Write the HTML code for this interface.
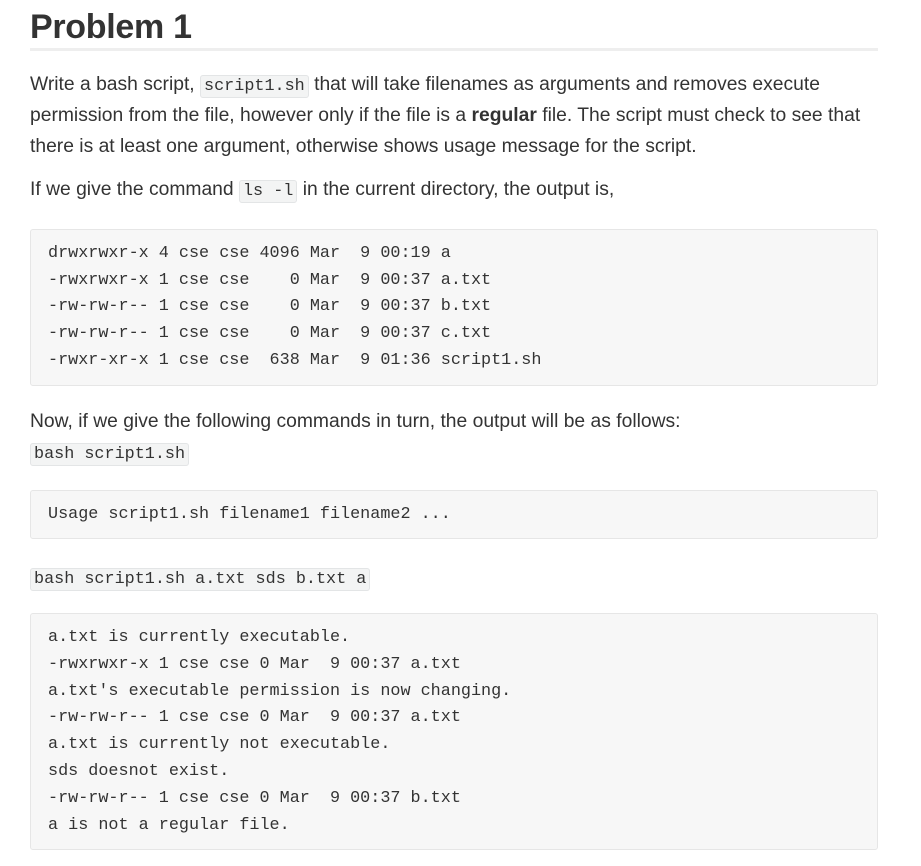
<!DOCTYPE html>
<html><head><style>
body{margin:0;background:#fff;width:921px;height:866px;position:relative;overflow:hidden;font-family:"Liberation Sans",sans-serif;color:#333}
h1{position:absolute;left:30px;top:8px;margin:0;font-size:34px;font-weight:bold;letter-spacing:-0.3px;color:#333}
.hr{position:absolute;left:30px;top:48px;width:848px;height:3px;background:#eee}
.p{position:absolute;left:30px;font-size:19.3px;white-space:nowrap;letter-spacing:0}
code{font-family:"Liberation Mono",monospace;font-size:16.8px;background:#f3f4f4;border:1px solid #e3e5e6;border-radius:3px;padding:1px 3px;color:#333;letter-spacing:0}
.blk{position:absolute;left:30px;width:846px;background:#f7f7f7;border:1px solid #e6e6e6;border-radius:3px}
.m{position:absolute;left:48px;font-family:"Liberation Mono",monospace;font-size:16.8px;white-space:pre;line-height:20px}
</style></head><body>
<h1>Problem 1</h1>
<div class="hr"></div>
<div class="p" style="top:74px">Write a bash script, <code>script1.sh</code> that will take filenames as arguments and removes execute</div>
<div class="p" style="top:105px">permission from the file, however only if the file is a <b>regular</b> file. The script must check to see that</div>
<div class="p" style="top:136px">there is at least one argument, otherwise shows usage message for the script.</div>
<div class="p" style="top:179px">If we give the command <code>ls -l</code> in the current directory, the output is,</div>
<div class="blk" style="top:229px;height:155px"></div>
<div class="m" style="top:244px">drwxrwxr-x 4 cse cse 4096 Mar  9 00:19 a</div>
<div class="m" style="top:271px">-rwxrwxr-x 1 cse cse    0 Mar  9 00:37 a.txt</div>
<div class="m" style="top:297px">-rw-rw-r-- 1 cse cse    0 Mar  9 00:37 b.txt</div>
<div class="m" style="top:324px">-rw-rw-r-- 1 cse cse    0 Mar  9 00:37 c.txt</div>
<div class="m" style="top:351px">-rwxr-xr-x 1 cse cse  638 Mar  9 01:36 script1.sh</div>
<div class="p" style="top:411px">Now, if we give the following commands in turn, the output will be as follows:</div>
<div class="p" style="top:442px"><code>bash script1.sh</code></div>
<div class="blk" style="top:490px;height:47px"></div>
<div class="m" style="top:505px">Usage script1.sh filename1 filename2 ...</div>
<div class="p" style="top:567px"><code>bash script1.sh a.txt sds b.txt a</code></div>
<div class="blk" style="top:613px;height:235px"></div>
<div class="m" style="top:628px">a.txt is currently executable.</div>
<div class="m" style="top:655px">-rwxrwxr-x 1 cse cse 0 Mar  9 00:37 a.txt</div>
<div class="m" style="top:682px">a.txt's executable permission is now changing.</div>
<div class="m" style="top:708px">-rw-rw-r-- 1 cse cse 0 Mar  9 00:37 a.txt</div>
<div class="m" style="top:735px">a.txt is currently not executable.</div>
<div class="m" style="top:762px">sds doesnot exist.</div>
<div class="m" style="top:789px">-rw-rw-r-- 1 cse cse 0 Mar  9 00:37 b.txt</div>
<div class="m" style="top:816px">a is not a regular file.</div>
</body></html>
